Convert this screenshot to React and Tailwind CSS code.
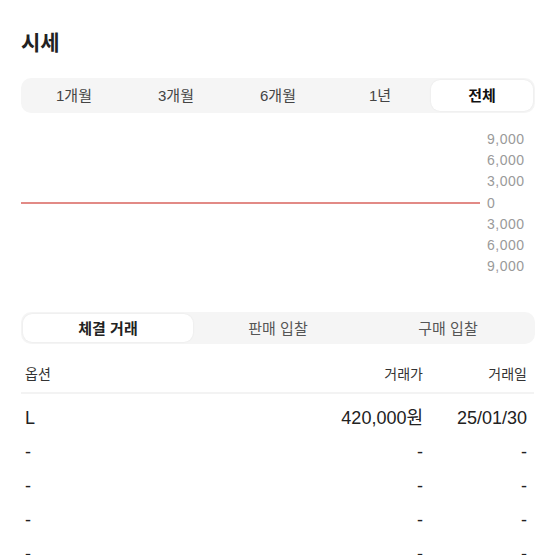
import React, { useState } from "react";

const periods = ["1개월", "3개월", "6개월", "1년", "전체"];
const tradeTabs = ["체결 거래", "판매 입찰", "구매 입찰"];
const axis = ["9,000", "6,000", "3,000", "0", "3,000", "6,000", "9,000"];
const rows = [
  { option: "L", price: "420,000원", date: "25/01/30" },
  { option: "-", price: "-", date: "-" },
  { option: "-", price: "-", date: "-" },
  { option: "-", price: "-", date: "-" },
  { option: "-", price: "-", date: "-" },
];

const App = () => {
  const [period, setPeriod] = useState("전체");
  const [tab, setTab] = useState("체결 거래");

  return (
    <div
      className="w-[555px] h-[555px] overflow-hidden bg-white px-[21px] pt-[29px]"
      style={{ fontFamily: '"Liberation Sans", "Noto Sans CJK KR", sans-serif' }}
    >
      <h1 className="text-[21px] leading-[28px] font-bold text-[#222]">시세</h1>

      <div className="mt-[21px] h-[35px] w-[514px] rounded-[10px] bg-[#f5f5f5] p-[2px] grid grid-cols-5">
        {periods.map((p) => (
          <button
            key={p}
            onClick={() => setPeriod(p)}
            className={`rounded-[9px] text-[15px] leading-none ${
              period === p
                ? "bg-white text-[#111] font-semibold shadow-[0_0_2px_rgba(0,0,0,0.08)]"
                : "text-[#444]"
            }`}
          >
            {p}
          </button>
        ))}
      </div>

      <div className="mt-[16px] flex items-center">
        <div className="flex-1 h-[1.5px] bg-[#e28a86]"></div>
        <div className="w-[54px] pl-[7px] flex flex-col text-[14px] tracking-[0.5px] leading-[21.2px] text-[#9a9a9a]">
          {axis.map((a, i) => (
            <span key={i}>{a}</span>
          ))}
        </div>
      </div>

      <div className="mt-[35px] h-[32px] w-[514px] rounded-[10px] bg-[#f5f5f5] p-[2px] grid grid-cols-3">
        {tradeTabs.map((t) => (
          <button
            key={t}
            onClick={() => setTab(t)}
            className={`rounded-[9px] text-[15px] leading-none ${
              tab === t
                ? "bg-white text-[#222] font-semibold shadow-[0_0_2px_rgba(0,0,0,0.08)]"
                : "text-[#555]"
            }`}
          >
            {t}
          </button>
        ))}
      </div>

      <div className="mt-[20px] flex pl-[4px] pr-[7px] pb-[8px] border-b-2 border-[#f3f3f3] text-[14px] leading-[20px] text-[#333]">
        <span className="flex-1">옵션</span>
        <span>거래가</span>
        <span className="w-[104px] text-right">거래일</span>
      </div>

      <div className="mt-[7px]">
        {rows.map((r, i) => (
          <div
            key={i}
            className="h-[34px] flex items-center pl-[4px] pr-[7px] text-[18px] text-[#222]"
          >
            <span className="flex-1">{r.option}</span>
            <span>{r.price}</span>
            <span className="w-[104px] text-right">{r.date}</span>
          </div>
        ))}
      </div>
    </div>
  );
};

export default App;
